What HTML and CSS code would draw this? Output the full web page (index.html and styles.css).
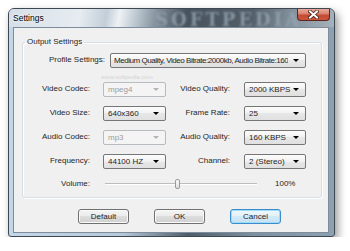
FILE: index.html
```html
<!DOCTYPE html>
<html lang="en">
<head>
    <meta charset="UTF-8">
    <title>Settings</title>
    <link rel="stylesheet" href="styles.css">
</head>
<body>
    <div class="window">
        <div class="titlebar">
            <span class="title">Settings</span>
            <span class="watermark">SOFTPEDIA</span>
            <div class="close">
                <svg width="11" height="9" viewBox="0 0 11 9">
                    <path d="M2 1.5 L9 7.5 M9 1.5 L2 7.5" stroke="#4a1d16" stroke-width="3.6" stroke-linecap="square"/>
                    <path d="M2 1.5 L9 7.5 M9 1.5 L2 7.5" stroke="#ffffff" stroke-width="2" stroke-linecap="square"/>
                </svg>
            </div>
        </div>
        <div class="client">
            <fieldset class="group">
                <legend>Output Settings</legend>
                <span class="site-mark">www.softpedia.com</span>
                <div class="profile-row">
                    <span class="label profile-label">Profile Settings:</span>
                    <div class="combo profile-combo"><span class="combo-text tight">Medium Quality, Video Bitrate:2000kb, Audio Bitrate:160</span><span class="arrow"></span></div>
                </div>
                <div class="grid">
                    <span class="label">Video Codec:</span>
                    <div class="combo disabled"><span class="combo-text">mpeg4</span><span class="arrow"></span></div>
                    <span class="label right">Video Quality:</span>
                    <div class="combo"><span class="combo-text">2000 KBPS</span><span class="arrow"></span></div>

                    <span class="label">Video Size:</span>
                    <div class="combo"><span class="combo-text">640x360</span><span class="arrow"></span></div>
                    <span class="label right">Frame Rate:</span>
                    <div class="combo"><span class="combo-text">25</span><span class="arrow"></span></div>

                    <span class="label">Audio Codec:</span>
                    <div class="combo disabled"><span class="combo-text">mp3</span><span class="arrow"></span></div>
                    <span class="label right">Audio Quality:</span>
                    <div class="combo"><span class="combo-text">160 KBPS</span><span class="arrow"></span></div>

                    <span class="label">Frequency:</span>
                    <div class="combo"><span class="combo-text">44100 HZ</span><span class="arrow"></span></div>
                    <span class="label right">Channel:</span>
                    <div class="combo"><span class="combo-text">2 (Stereo)</span><span class="arrow"></span></div>
                </div>
                <div class="volume-row">
                    <span class="label vol-label">Volume:</span>
                    <div class="slider">
                        <div class="track"></div>
                        <div class="thumb"></div>
                    </div>
                    <span class="percent">100%</span>
                </div>
            </fieldset>
            <div class="buttons">
                <button class="btn">Default</button>
                <button class="btn">OK</button>
                <button class="btn focused">Cancel</button>
            </div>
        </div>
    </div>
</body>
</html>
```

FILE: styles.css
```css
body {
    margin: 0;
    background-color: #ffffff;
    font-family: "Liberation Sans", Arial, sans-serif;
    font-size: 8px;
    color: #1e1e1e;
}
.window {
    margin: 8px 0 0 8px;
    width: 327px;
    height: 229px;
    box-sizing: border-box;
    border: 1px solid #3e4852;
    border-radius: 6px 6px 3px 3px;
    background: linear-gradient(to right, #c3d7ea, #b6c9da 35%, #4f5e6a 55%, #7d909f 75%, #8ea1b0);
    box-shadow: 3px 4px 8px rgba(0, 0, 0, 0.4);
    display: flex;
    flex-direction: column;
    overflow: hidden;
}
.titlebar {
    position: relative;
    height: 18px;
    display: flex;
    align-items: flex-start;
    background: linear-gradient(100deg, #d6dfe8 0%, #e6ecf1 22%, #c3ced8 30%, #eef2f5 34%, #b4c0ca 40%, #7f8c97 46%, #48535d 54%, #525d67 74%, #81909c 86%, #a6b2bc 100%);
}
.title {
    margin: 5px 0 0 4px;
    line-height: 9px;
    font-size: 8.5px;
    color: #000000;
    text-shadow: 0 0 4px #ffffff, 0 0 2px #ffffff;
}
.watermark {
    position: absolute;
    left: 146px;
    top: 0;
    font-family: "DejaVu Serif", serif;
    font-size: 18px;
    font-weight: bold;
    letter-spacing: 3px;
    color: #95a4b0;
    filter: blur(0.8px);
    opacity: 0.8;
}
.close {
    position: relative;
    margin-left: auto;
    margin-right: 4px;
    width: 33px;
    height: 12px;
    box-sizing: border-box;
    border: 1px solid #5e241c;
    border-top: none;
    border-radius: 0 0 4px 4px;
    background: linear-gradient(#eaa898, #d8826f 45%, #c44a33 55%, #c9563c);
    display: flex;
    align-items: center;
    justify-content: center;
}
.client {
    flex: 1;
    margin: 0 5px 3px 4px;
    border: 1px solid #7d8d9b;
    background-color: #f0f0f0;
}
.group {
    margin: 9px 6px 0 8px;
    padding: 6px 0 8px 0;
    border: 1px solid #d5dfe5;
    border-radius: 3px;
    box-shadow: inset 1px 1px 0 #ffffff, 1px 1px 0 #ffffff;
    position: relative;
}
.group legend {
    padding: 0 2px;
    margin-left: 2px;
    line-height: 10px;
}
.site-mark {
    position: absolute;
    left: 78px;
    top: 27px;
    font-size: 6px;
    color: #d4d4d4;
}
.label {
    text-align: right;
    line-height: 14px;
    white-space: nowrap;
}
.profile-row {
    display: flex;
    height: 15px;
}
.profile-label {
    width: 82px;
    margin-right: 5px;
}
.profile-combo {
    width: 196px;
}
.grid {
    margin-top: 14px;
    display: grid;
    grid-template-columns: 80px 63px 78px 62px;
    grid-auto-rows: 15px;
    row-gap: 9px;
}
.grid .label {
    padding-right: 13px;
}
.grid .label.right {
    padding-right: 14px;
}
.combo {
    position: relative;
    height: 15px;
    box-sizing: border-box;
    border: 1px solid #767676;
    border-radius: 2px;
    background: linear-gradient(#fcfcfc, #f1f1f1 50%, #e7e7e7 50%, #e0e0e0);
    display: flex;
    align-items: center;
    overflow: hidden;
}
.combo-text {
    padding-left: 4px;
    padding-right: 14px;
    white-space: nowrap;
    overflow: hidden;
}
.combo-text.tight {
    padding-left: 3px;
    padding-right: 0;
    letter-spacing: -0.45px;
}
.arrow {
    position: absolute;
    right: 6px;
    top: 5px;
    width: 0;
    height: 0;
    border-left: 3px solid transparent;
    border-right: 3px solid transparent;
    border-top: 3px solid #000000;
}
.combo.disabled {
    border-color: #b8bcbf;
    background: #f4f4f4;
    color: #9c9c9c;
}
.combo.disabled .arrow {
    border-top-color: #b4b4b4;
}
.volume-row {
    margin-top: 9px;
    display: flex;
    align-items: center;
    height: 11px;
}
.vol-label {
    width: 67px;
    line-height: 11px;
}
.slider {
    position: relative;
    margin-left: 15px;
    width: 152px;
    height: 11px;
}
.track {
    position: absolute;
    left: 0;
    right: 0;
    top: 5px;
    height: 1px;
    background-color: #bdbdbd;
    border-bottom: 1px solid #ffffff;
}
.thumb {
    position: absolute;
    left: 70px;
    top: 1px;
    width: 3px;
    height: 8px;
    border: 1px solid #999999;
    border-radius: 2px;
    background: linear-gradient(#fafafa, #dedede);
}
.percent {
    margin-left: 18px;
}
.buttons {
    display: flex;
    gap: 25px;
    margin-top: 11px;
    padding-left: 64px;
}
.btn {
    width: 51px;
    height: 15px;
    padding: 0;
    font-family: "Liberation Sans", Arial, sans-serif;
    font-size: 8px;
    color: #1e1e1e;
    border: 1px solid #707070;
    border-radius: 3px;
    background: linear-gradient(#f4f4f4, #ebebeb 50%, #dddddd 50%, #d0d0d0);
    box-shadow: inset 0 0 0 1px #fafafa;
}
.btn.focused {
    border-color: #3a8ccb;
    background: linear-gradient(#eff7fc, #e3f1fa 50%, #d3e9f7 50%, #c5e1f3);
    box-shadow: inset 0 0 0 1px #9fdcf7;
}
```
